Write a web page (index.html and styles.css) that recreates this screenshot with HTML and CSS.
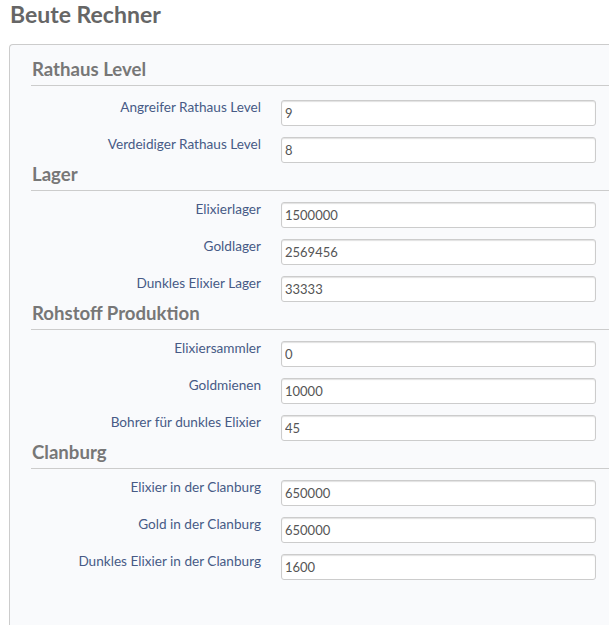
FILE: index.html
```html
<!DOCTYPE html>
<html lang="de">
<head>
<meta charset="utf-8">
<title>Beute Rechner</title>
<link rel="stylesheet" href="styles.css">
</head>
<body>
<div class="page">
  <h1 class="title">Beute Rechner</h1>
  <div class="panel">
    <section class="section first">
      <h3 class="section-title">Rathaus Level</h3>
      <div class="rows">
        <div class="row"><label class="label">Angreifer Rathaus Level</label><input class="field" type="text" value="9"></div>
        <div class="row"><label class="label">Verdeidiger Rathaus Level</label><input class="field" type="text" value="8"></div>
      </div>
    </section>
    <section class="section">
      <h3 class="section-title">Lager</h3>
      <div class="rows">
        <div class="row"><label class="label">Elixierlager</label><input class="field" type="text" value="1500000"></div>
        <div class="row"><label class="label">Goldlager</label><input class="field" type="text" value="2569456"></div>
        <div class="row"><label class="label">Dunkles Elixier Lager</label><input class="field" type="text" value="33333"></div>
      </div>
    </section>
    <section class="section">
      <h3 class="section-title">Rohstoff Produktion</h3>
      <div class="rows">
        <div class="row"><label class="label">Elixiersammler</label><input class="field" type="text" value="0"></div>
        <div class="row"><label class="label">Goldmienen</label><input class="field" type="text" value="10000"></div>
        <div class="row"><label class="label">Bohrer für dunkles Elixier</label><input class="field" type="text" value="45"></div>
      </div>
    </section>
    <section class="section">
      <h3 class="section-title">Clanburg</h3>
      <div class="rows">
        <div class="row"><label class="label">Elixier in der Clanburg</label><input class="field" type="text" value="650000"></div>
        <div class="row"><label class="label">Gold in der Clanburg</label><input class="field" type="text" value="650000"></div>
        <div class="row"><label class="label">Dunkles Elixier in der Clanburg</label><input class="field" type="text" value="1600"></div>
      </div>
    </section>
  </div>
</div>
</body>
</html>
```
FILE: styles.css
```css
html, body {
  margin: 0;
  padding: 0;
  height: 625px;
  overflow: hidden;
  background: #ffffff;
}

body {
  font-family: Lato, "Open Sans", "DejaVu Sans", sans-serif;
}

.page {
  padding-left: 9px;
}

.title {
  margin: 0;
  padding: 1px 0 0 1px;
  font-size: 23px;
  line-height: 26px;
  font-weight: bold;
  color: #666666;
}

.panel {
  margin-top: 17px;
  border: 1px solid #cccccc;
  border-right: none;
  border-radius: 4px 0 0 0;
  background: #f9fafc;
  padding: 13px 0 60px 21px;
}

.section-title {
  margin: 0;
  padding: 0 0 5px 1px;
  font-size: 18.6px;
  line-height: 22px;
  font-weight: bold;
  color: #777777;
  border-bottom: 1px solid #cccccc;
}

.rows {
  display: flex;
  flex-direction: column;
  gap: 11px;
  padding-top: 11px;
}

.first .rows {
  padding-top: 14px;
}

.row {
  display: grid;
  grid-template-columns: 230px 315px;
  column-gap: 20px;
  align-items: start;
}

.label {
  text-align: right;
  font-size: 13.6px;
  line-height: 14px;
  color: #475a86;
}

.field {
  box-sizing: border-box;
  width: 315px;
  height: 26px;
  margin: 0;
  padding: 0 3px;
  border: 1px solid #cccccc;
  border-radius: 3px;
  box-shadow: inset 0 1px 1px rgba(0, 0, 0, 0.12);
  background: #ffffff;
  font-family: Lato, "Open Sans", sans-serif;
  font-size: 13px;
  color: #555555;
  outline: none;
}
```
